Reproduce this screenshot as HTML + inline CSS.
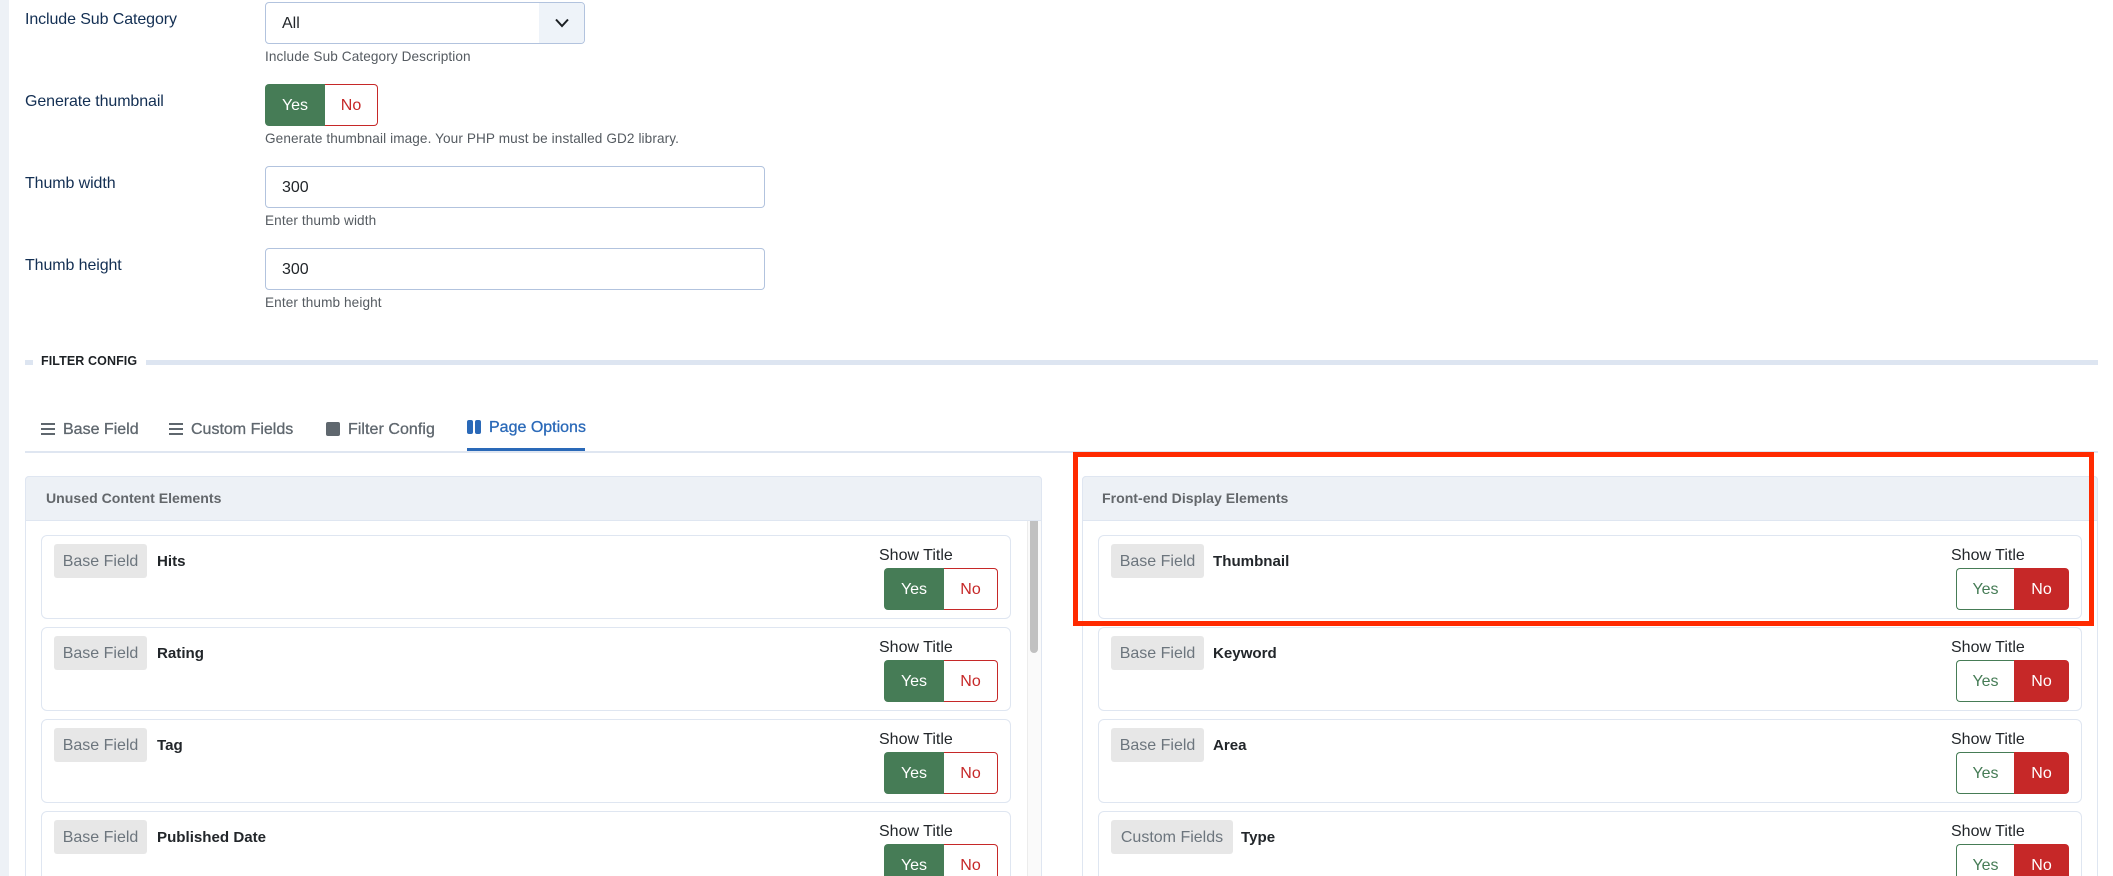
<!DOCTYPE html>
<html><head><meta charset="utf-8"><title>Filter Config</title>
<style>
html,body{margin:0;padding:0;background:#fff;width:2113px;height:876px;overflow:hidden}
body{font-family:"Liberation Sans",sans-serif;color:#22262a}
#w{position:relative;width:2113px;height:876px;overflow:hidden;background:#fff}
.a,.t{position:absolute;box-sizing:border-box}
.t{white-space:nowrap;line-height:24px;height:24px;margin-top:1px}
.lab{left:25px;font-size:16px;color:#132f53;letter-spacing:-.1px}
.help{left:265px;font-size:13.6px;color:#555b61;letter-spacing:.1px}
.inp{left:265px;width:500px;height:42px;border:1px solid #b2c3de;border-radius:4px;background:#fff}
.val{left:282px;font-size:16px}
.tab{font-size:16px;font-weight:400;color:#5f676e;-webkit-text-stroke:.3px #5f676e}
.panel{top:476px;height:420px;border:1px solid #dfe6f1;border-radius:4px 4px 0 0;background:#fff}
.ph{top:476px;height:45px;background:#edf1f6;border:1px solid #dfe6f1;border-radius:4px 4px 0 0}
.pt{top:486px;font-size:14.1px;font-weight:700;color:#63676b;margin-top:0}
.item{height:84px;border:1px solid #dfe6f1;border-radius:6px;background:#fff}
.badge{height:34px;background:#e7e7e7;border-radius:3px;color:#6c757d;font-size:16px;line-height:35px;text-align:center;white-space:nowrap}
.name{font-size:15.1px;font-weight:700;margin-top:.5px}
.st{font-size:16px}
.yes,.no{height:42px;text-align:center;font-size:16px}
.y1{background:#467c56;color:#fff;border-radius:4px 0 0 4px;line-height:43px}
.n1{background:#fff;color:#c62828;border:1px solid #c62828;border-left:0;border-radius:0 4px 4px 0;line-height:41px}
.y2{background:#fff;color:#467c56;border:1px solid #467c56;border-right:0;border-radius:4px 0 0 4px;line-height:41px}
.n2{background:#c62828;color:#fff;border-radius:0 4px 4px 0;line-height:43px}
.ham{width:14px;height:2.2px;background:#5f676e}
</style></head><body><div id="w">

<div class="a" style="left:0;top:0;width:9px;height:876px;background:#edf1f6"></div>

<!-- form -->
<div class="t lab" style="top:7px">Include Sub Category</div>
<div class="a inp" style="top:2px;width:320px"></div>
<div class="a" style="left:539px;top:3px;width:45px;height:40px;background:#eef3f9;border-radius:0 3px 3px 0"></div>
<svg class="a" style="left:554px;top:17px" width="16" height="12" viewBox="0 0 16 12"><path d="M2 2.5 L8 9 L14 2.5" fill="none" stroke="#1b1f23" stroke-width="2"/></svg>
<div class="t val" style="top:11px">All</div>
<div class="t help" style="top:44px">Include Sub Category Description</div>

<div class="t lab" style="top:89px">Generate thumbnail</div>
<div class="a yes y1" style="left:265px;top:84px;width:60px">Yes</div>
<div class="a no n1" style="left:325px;top:84px;width:53px">No</div>
<div class="t help" style="top:126px">Generate thumbnail image. Your PHP must be installed GD2 library.</div>

<div class="t lab" style="top:171px">Thumb width</div>
<div class="a inp" style="top:166px"></div>
<div class="t val" style="top:175px">300</div>
<div class="t help" style="top:208px">Enter thumb width</div>

<div class="t lab" style="top:253px">Thumb height</div>
<div class="a inp" style="top:248px"></div>
<div class="t val" style="top:257px">300</div>
<div class="t help" style="top:290px">Enter thumb height</div>

<!-- legend -->
<div class="a" style="left:25px;top:360px;width:8px;height:5px;background:#dde5f1"></div>
<div class="t" style="left:41px;top:349px;font-size:12.5px;font-weight:700;color:#1d2125;letter-spacing:.1px;margin-top:0">FILTER CONFIG</div>
<div class="a" style="left:146px;top:360px;width:1952px;height:5px;background:#dde5f1"></div>

<!-- tabs -->
<div class="a" style="left:25px;top:451px;width:2073px;height:1.5px;background:#dfe6f1"></div>
<div class="a ham" style="left:41px;top:423px"></div><div class="a ham" style="left:41px;top:428px"></div><div class="a ham" style="left:41px;top:433px"></div>
<div class="t tab" style="left:63px;top:417px">Base Field</div>
<div class="a ham" style="left:169px;top:423px"></div><div class="a ham" style="left:169px;top:428px"></div><div class="a ham" style="left:169px;top:433px"></div>
<div class="t tab" style="left:191px;top:417px">Custom Fields</div>
<div class="a" style="left:326px;top:422px;width:14px;height:14px;background:#5f676e;border-radius:2px"></div>
<div class="t tab" style="left:348px;top:417px;letter-spacing:.05px">Filter Config</div>
<div class="a" style="left:467px;top:420px;width:6px;height:14px;background:#2a69b8;border-radius:2px"></div>
<div class="a" style="left:475px;top:420px;width:6px;height:14px;background:#2a69b8;border-radius:2px"></div>
<div class="t tab" style="left:489px;top:415px;color:#2a69b8;-webkit-text-stroke:.3px #2a69b8">Page Options</div>
<div class="a" style="left:467px;top:448px;width:118px;height:3px;background:#2a69b8"></div>

<!-- left panel -->
<div class="a panel" style="left:25px;width:1017px"></div>
<div class="a ph" style="left:25px;width:1017px"></div>
<div class="t pt" style="left:46px">Unused Content Elements</div>
<div class="a" style="left:1027px;top:521px;width:14px;height:360px;background:#fafafa;border-left:1px solid #ececec"></div>
<div class="a" style="left:1030px;top:521px;width:8px;height:132px;background:#c1c1c1;border-radius:0 0 4px 4px"></div>

<!-- right panel -->
<div class="a panel" style="left:1082px;width:1016px"></div>
<div class="a ph" style="left:1082px;width:1016px"></div>
<div class="t pt" style="left:1102px">Front-end Display Elements</div>

<!-- left items -->
<div class="a item" style="left:41px;top:535px;width:970px"></div>
<div class="a badge" style="left:54px;top:544px;width:93px">Base Field</div>
<div class="t name" style="left:157px;top:549px">Hits</div>
<div class="t st" style="left:879px;top:543px">Show Title</div>
<div class="a yes y1" style="left:884px;top:568px;width:60px">Yes</div>
<div class="a no n1" style="left:944px;top:568px;width:54px">No</div>

<div class="a item" style="left:41px;top:627px;width:970px"></div>
<div class="a badge" style="left:54px;top:636px;width:93px">Base Field</div>
<div class="t name" style="left:157px;top:641px">Rating</div>
<div class="t st" style="left:879px;top:635px">Show Title</div>
<div class="a yes y1" style="left:884px;top:660px;width:60px">Yes</div>
<div class="a no n1" style="left:944px;top:660px;width:54px">No</div>

<div class="a item" style="left:41px;top:719px;width:970px"></div>
<div class="a badge" style="left:54px;top:728px;width:93px">Base Field</div>
<div class="t name" style="left:157px;top:733px">Tag</div>
<div class="t st" style="left:879px;top:727px">Show Title</div>
<div class="a yes y1" style="left:884px;top:752px;width:60px">Yes</div>
<div class="a no n1" style="left:944px;top:752px;width:54px">No</div>

<div class="a item" style="left:41px;top:811px;width:970px"></div>
<div class="a badge" style="left:54px;top:820px;width:93px">Base Field</div>
<div class="t name" style="left:157px;top:825px">Published Date</div>
<div class="t st" style="left:879px;top:819px">Show Title</div>
<div class="a yes y1" style="left:884px;top:844px;width:60px">Yes</div>
<div class="a no n1" style="left:944px;top:844px;width:54px">No</div>

<!-- right items -->
<div class="a item" style="left:1098px;top:535px;width:984px"></div>
<div class="a badge" style="left:1111px;top:544px;width:93px">Base Field</div>
<div class="t name" style="left:1213px;top:549px">Thumbnail</div>
<div class="t st" style="left:1951px;top:543px">Show Title</div>
<div class="a yes y2" style="left:1956px;top:568px;width:58px">Yes</div>
<div class="a no n2" style="left:2014px;top:568px;width:55px">No</div>

<div class="a item" style="left:1098px;top:627px;width:984px"></div>
<div class="a badge" style="left:1111px;top:636px;width:93px">Base Field</div>
<div class="t name" style="left:1213px;top:641px">Keyword</div>
<div class="t st" style="left:1951px;top:635px">Show Title</div>
<div class="a yes y2" style="left:1956px;top:660px;width:58px">Yes</div>
<div class="a no n2" style="left:2014px;top:660px;width:55px">No</div>

<div class="a item" style="left:1098px;top:719px;width:984px"></div>
<div class="a badge" style="left:1111px;top:728px;width:93px">Base Field</div>
<div class="t name" style="left:1213px;top:733px">Area</div>
<div class="t st" style="left:1951px;top:727px">Show Title</div>
<div class="a yes y2" style="left:1956px;top:752px;width:58px">Yes</div>
<div class="a no n2" style="left:2014px;top:752px;width:55px">No</div>

<div class="a item" style="left:1098px;top:811px;width:984px"></div>
<div class="a badge" style="left:1111px;top:820px;width:122px">Custom Fields</div>
<div class="t name" style="left:1241px;top:825px">Type</div>
<div class="t st" style="left:1951px;top:819px">Show Title</div>
<div class="a yes y2" style="left:1956px;top:844px;width:58px">Yes</div>
<div class="a no n2" style="left:2014px;top:844px;width:55px">No</div>

<!-- highlight -->
<div class="a" style="left:1073px;top:452px;width:1021px;height:174px;border:5px solid #ff2a00"></div>
</div></body></html>
